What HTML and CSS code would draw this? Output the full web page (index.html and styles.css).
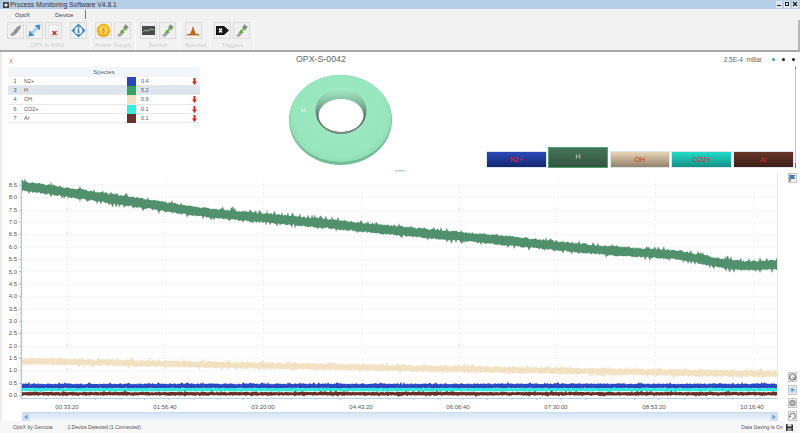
FILE: index.html
```html
<!DOCTYPE html>
<html lang="en">
<head>
<meta charset="utf-8">
<title>Process Monitoring Software</title>
<link rel="stylesheet" href="styles.css">
</head>
<body>
<svg class="defs" width="0" height="0">
  <symbol id="wrench" viewBox="0 0 15 15">
    <path d="M2 13l5-6 3 2-5 5z" fill="#a4a4a4"/>
    <path d="M9 3l2-2 1 2 2 1-2 2-1 2-1-2-2-1z" fill="#8e8e8e"/>
    <path d="M12 3.500L8 7.500" stroke="#6f6f6f" stroke-width="1"/>
    <path d="M11 4.500L7.500 8" stroke="#63b52f" stroke-width="1.300"/>
    <path d="M5.200 10.500l1-4 3 3z" fill="#63b52f"/>
  </symbol>
</svg>
<header class="titlebar">
  <svg class="appicon" viewBox="0 0 6 6"><rect width="6" height="6" fill="#444"/><circle cx="3" cy="3" r="1.600" fill="#eee"/></svg>
  <span class="apptitle">Process Monitoring Software V4.8.1</span>
  <div class="winbtns">
    <span class="winbtn"><svg viewBox="0 0 6 6"><rect x="1" y="4" width="4" height="1" fill="#222"/></svg></span>
    <span class="winbtn"><svg viewBox="0 0 6 6"><rect x="1.500" y="1.500" width="3" height="3" fill="none" stroke="#222"/></svg></span>
    <span class="winbtn"><svg viewBox="0 0 6 6"><path d="M1 1l4 4M5 1L1 5" stroke="#111" stroke-width="1.200"/></svg></span>
  </div>
</header>
<nav class="tabs">
  <span class="tab tab-optix">OptiX</span>
  <span class="tab tab-device">Device</span>
  <span class="tabsep"></span>
</nav>
<section class="ribbon">
  <div class="group group-first">
    <div class="btns">
      <span class="rbtn"><svg viewBox="0 0 15 15"><path d="M2 12l3-3 4-5 4-2-1 4-4 5-3 2z" fill="#8f8f8f"/><path d="M4 9l3 3M8 4l3 3" stroke="#b5b5b5"/></svg></span>
      <span class="rbtn"><svg viewBox="0 0 15 15"><path d="M1.500 13.500l1-6 5 5z" fill="#3d8fdc"/><path d="M13.500 1.500l-1 6-5-5z" fill="#3d8fdc"/><path d="M5 10l5-5" stroke="#a9d2f2" stroke-width="3"/></svg></span>
      <span class="rbtn"><svg viewBox="0 0 15 15"><rect x="3" y="2" width="9" height="11" fill="#fff" stroke="#ccc" stroke-width=".6"/><path d="M6.500 8l4 4M10.500 8l-4 4" stroke="#d92020" stroke-width="1.500"/></svg></span>
      <span class="rbtn rbtn-gap"><svg viewBox="0 0 15 15"><path d="M7.500 .5l7 7-7 7-7-7z" fill="#3f87cf"/><circle cx="7.500" cy="7.500" r="3.800" fill="#e9f3fb"/><rect x="6.800" y="6.500" width="1.500" height="3.500" fill="#2a67b0"/><rect x="6.800" y="4.500" width="1.500" height="1.300" fill="#2a67b0"/></svg></span>
    </div>
    <span class="grouplabel">OPX-S-0042</span>
  </div>
  <div class="group">
    <div class="btns">
      <span class="rbtn"><svg viewBox="0 0 15 15"><circle cx="7.500" cy="7.500" r="6.800" fill="#f4ae1c"/><circle cx="7.500" cy="7" r="4.500" fill="#fcd34a"/><path d="M8.300 4L6.800 7.500h1.600L7 11" fill="none" stroke="#e0782a" stroke-width=".9"/></svg></span>
      <span class="rbtn"><svg viewBox="0 0 15 15"><use href="#wrench"/></svg></span>
    </div>
    <span class="grouplabel">Power Supply</span>
  </div>
  <div class="group">
    <div class="btns">
      <span class="rbtn"><svg viewBox="0 0 15 15"><rect x="1" y="3" width="13" height="9" fill="#4a4a4a"/><path d="M2 9l3-2 2 1 3-2 3 1" fill="none" stroke="#8fc7a0"/></svg></span>
      <span class="rbtn"><svg viewBox="0 0 15 15"><use href="#wrench"/></svg></span>
    </div>
    <span class="grouplabel">Sensor</span>
  </div>
  <div class="group group-species">
    <div class="btns">
      <span class="rbtn"><svg viewBox="0 0 15 15"><path d="M1 11h3l1-2 2-6 2 6 1 2h3v1H1z" fill="#b9661d"/><path d="M1 12.500h13" stroke="#e8b98a"/></svg></span>
    </div>
    <span class="grouplabel">Species</span>
  </div>
  <div class="group">
    <div class="btns">
      <span class="rbtn"><svg viewBox="0 0 15 15"><path d="M1 3h8l5 4.500-5 4.500H1z" fill="#161616"/><path d="M4 5.500l3 4M7 5.500l-3 4" stroke="#fff" stroke-width="1.300"/></svg></span>
      <span class="rbtn"><svg viewBox="0 0 15 15"><use href="#wrench"/></svg></span>
    </div>
    <span class="grouplabel">Triggers</span>
  </div>
</section>
<main class="main">
  <section class="top">
    <div class="left">
      <svg class="chi" viewBox="0 0 4 6"><path d="M.5 .5l3 5M3.500 .5l-3 5" stroke="#e2736e" stroke-width=".7"/></svg>
      <div class="species">
        <div class="species-head">Species</div>
        <div class="srow"><span class="snum">1</span><span class="sname">N2+</span><span class="swatch c-n2"></span><span class="sval">0.4</span><span class="sarrow"><svg viewBox="0 0 5 7"><path d="M1.500 0h2v3.500H5L2.500 7 0 3.500h1.500z"/></svg></span></div>
        <div class="srow selected"><span class="snum">3</span><span class="sname">H</span><span class="swatch c-h"></span><span class="sval">5.2</span><span class="sarrow"></span></div>
        <div class="srow"><span class="snum">4</span><span class="sname">OH</span><span class="swatch c-oh"></span><span class="sval">0.9</span><span class="sarrow"><svg viewBox="0 0 5 7"><path d="M1.500 0h2v3.500H5L2.500 7 0 3.500h1.500z"/></svg></span></div>
        <div class="srow"><span class="snum">6</span><span class="sname">CO2+</span><span class="swatch c-co"></span><span class="sval">0.1</span><span class="sarrow"><svg viewBox="0 0 5 7"><path d="M1.500 0h2v3.500H5L2.500 7 0 3.500h1.500z"/></svg></span></div>
        <div class="srow"><span class="snum">7</span><span class="sname">Ar</span><span class="swatch c-ar"></span><span class="sval">0.1</span><span class="sarrow"><svg viewBox="0 0 5 7"><path d="M1.500 0h2v3.500H5L2.500 7 0 3.500h1.500z"/></svg></span></div>
      </div>
    </div>
    <div class="center">
      <h1 class="device">OPX-S-0042</h1>
      <svg class="torus" viewBox="285 70 125 102">
        <defs>
          <radialGradient id="tbody" gradientUnits="userSpaceOnUse" cx="340" cy="114" r="56" gradientTransform="translate(340 114) scale(1 .92) translate(-340 -114)">
            <stop offset="0" stop-color="#9be9c2"/>
            <stop offset=".82" stop-color="#97e6bd"/>
            <stop offset=".93" stop-color="#92dfb6"/>
            <stop offset="1" stop-color="#6fb892"/>
          </radialGradient>
          <linearGradient id="tlip" x1="0" y1="0" x2="0" y2="1">
            <stop offset="0" stop-color="#a6eec9"/>
            <stop offset=".35" stop-color="#7db798"/>
            <stop offset=".7" stop-color="#55655c"/>
            <stop offset="1" stop-color="#5b6a62"/>
          </linearGradient>
        </defs>
        <ellipse cx="340.500" cy="120" rx="51.500" ry="45" fill="#74bd96"/>
        <ellipse cx="340.500" cy="118.500" rx="51" ry="43.500" fill="url(#tbody)"/>
        <ellipse cx="341" cy="111" rx="25.500" ry="23" fill="url(#tlip)"/>
        <ellipse cx="341" cy="115.500" rx="22.500" ry="16.500" fill="#fff"/>
        <path d="M318.500 115.500a22.500 16.500 0 0 0 45 0a22.500 18.500 0 0 1-45 0z" fill="#7d8a83"/>
        <text class="torus-label" x="301" y="111.500">H</text>
        <rect x="395" y="170" width="10" height="1.500" fill="#bcd2e6"/>
      </svg>
    </div>
    <div class="right">
      <div class="readout">
        <span class="pressure">2.5E-4&nbsp;&nbsp;mBar</span>
        <span class="dot dot-blue"></span>
        <span class="dot"></span>
        <span class="dot"></span>
      </div>
      <div class="speciesbar">
        <div class="sbtn s-n2">N2+</div>
        <div class="sbtn s-h">H</div>
        <div class="sbtn s-oh">OH</div>
        <div class="sbtn s-co">CO2+</div>
        <div class="sbtn s-ar">Ar</div>
        <div class="sliver"></div>
      </div>
    </div>
  </section>
  <section class="chartrow">
    <div class="chartcol">
      <svg id="chart" class="chart" viewBox="2 172 784 240">
        <g id="grid"></g>
        <g class="ylabels">
          <text x="17" y="187">8.5</text><text x="17" y="199.400">8.0</text><text x="17" y="211.700">7.5</text>
          <text x="17" y="224.100">7.0</text><text x="17" y="236.400">6.5</text><text x="17" y="248.800">6.0</text>
          <text x="17" y="261.100">5.5</text><text x="17" y="273.500">5.0</text><text x="17" y="285.800">4.5</text>
          <text x="17" y="298.200">4.0</text><text x="17" y="310.500">3.5</text><text x="17" y="322.900">3.0</text>
          <text x="17" y="335.200">2.5</text><text x="17" y="347.600">2.0</text><text x="17" y="359.900">1.5</text>
          <text x="17" y="372.300">1.0</text><text x="17" y="384.600">0.5</text><text x="17" y="397">0.0</text>
        </g>
        <g class="xlabels">
          <text x="67" y="409">00:33:20</text><text x="165" y="409">01:56:40</text><text x="263" y="409">03:20:00</text>
          <text x="361" y="409">04:43:20</text><text x="458" y="409">06:06:40</text><text x="556" y="409">07:30:00</text>
          <text x="654" y="409">08:53:20</text><text x="752" y="409">10:16:40</text>
        </g>
        <g id="traces"></g>
      </svg>
      <div class="scrollbar">
        <span class="sarrowbtn"><svg viewBox="0 0 8 8"><path d="M5.500 1.500v5L2 4z" fill="#6d9fd0"/></svg></span>
        <span class="sarrowbtn"><svg viewBox="0 0 8 8"><path d="M2.500 1.500v5L6 4z" fill="#6d9fd0"/></svg></span>
      </div>
    </div>
    <aside class="side">
      <span class="sidebtn"><svg viewBox="0 0 9 10"><path d="M2 1.500v7" stroke="#333"/><path d="M2.500 2h5L6 4l1.500 2h-5z" fill="#2f7fc9"/></svg></span>
      <div class="sidestack">
        <span class="sidebtn"><svg viewBox="0 0 9 10"><circle cx="4.500" cy="5" r="3" fill="none" stroke="#777" stroke-width="1.200"/><path d="M4.500 5l3 3" stroke="#777"/></svg></span>
        <span class="sidebtn"><svg viewBox="0 0 9 10"><circle cx="4.500" cy="5" r="3.200" fill="#bcd7ef"/><path d="M3.500 3.200v3.600L6.300 5z" fill="#3e87cc"/></svg></span>
        <span class="sidebtn"><svg viewBox="0 0 9 10"><circle cx="4.500" cy="5" r="3.200" fill="#9a9a9a"/><circle cx="4.500" cy="5" r="1.500" fill="#c4c4c4"/></svg></span>
        <span class="sidebtn"><svg viewBox="0 0 9 10"><path d="M1.800 5.500a2.800 2.800 0 1 1 2.700 2.300" fill="none" stroke="#777"/><path d="M.5 5h2.600L1.800 7z" fill="#777"/></svg></span>
      </div>
    </aside>
  </section>
</main>
<footer class="status">
  <span class="st-brand">OptiX by Gencoa</span>
  <span class="st-dev">1 Device Detected (1 Connected).</span>
  <span class="st-save">Data Saving is On</span>
  <svg class="disk" viewBox="0 0 7 7"><path d="M0 0h6l1 1v6H0z" fill="#333"/><rect x="1.500" y="0" width="4" height="2.500" fill="#ddd"/><rect x="1.500" y="4" width="4" height="3" fill="#999"/></svg>
</footer>
<script src="chart.js"></script>
</body>
</html>
```
FILE: styles.css
```css
* { box-sizing: border-box; }
html, body { margin: 0; padding: 0; }
body {
  width: 800px; height: 433px; overflow: hidden;
  display: flex; flex-direction: column;
  font-family: "Liberation Sans", Arial, sans-serif;
  background: #fff; color: #555;
}
.defs { position: absolute; }
svg { display: block; }

.titlebar {
  height: 9px; background: #b5cee8; display: flex; align-items: center;
  padding: 0 2px 0 3px; font-size: 6.7px; color: #333;
}
.appicon { width: 6px; height: 6px; margin-right: 1px; }
.apptitle { white-space: nowrap; }
.winbtns { margin-left: auto; display: flex; gap: 2px; }
.winbtn { width: 6px; height: 7px; background: #dfe6ee; }

.tabs {
  height: 11px; background: #f1f1f1; display: flex; align-items: center;
  font-size: 6px; color: #444;
}
.tab-optix { margin-left: 15px; }
.tab-device { margin-left: 25px; }
.tabsep { width: 1px; height: 9px; background: #777; margin-left: 12px; }

.ribbon {
  height: 32px; background: #f1f1f1; display: flex; padding-top: 2px;
  border-bottom: 2px solid #a9a9a9;
  border-right: 2px solid #b5b5b5;
}
.group {
  display: flex; flex-direction: column;
  padding: 0 3px 0 4px; border-right: 1px solid #fafafa;
}
.group-first { padding-left: 7px; }
.group-species { padding-left: 5px; }
.btns { display: flex; gap: 2px; }
.rbtn {
  width: 17px; height: 17px; padding: 1px;
  background: #f0f0f0; border: 1px solid #dcdcdc;
}
.rbtn svg { width: 15px; height: 15px; margin: -1px; }
.rbtn-gap { margin-left: 6px; }
.grouplabel {
  margin-top: 2px; font-size: 6px; line-height: 8px; color: #cfcfcf;
  text-align: center; white-space: nowrap;
}

.main {
  flex: 1; display: flex; flex-direction: column; min-height: 0;
  border-left: 2px solid #ececec;
}
.top { height: 120px; display: flex; }

.left { width: 203px; padding: 6px 0 0 6px; }
.chi { width: 4px; height: 6px; margin-left: 1px; margin-bottom: 3px; }
.species { width: 192px; font-size: 5.5px; color: #555; }
.species-head {
  height: 10px; line-height: 10px; background: #f2f5f9; text-align: center;
  font-size: 6px; color: #666;
}
.srow {
  display: grid; grid-template-columns: 14px 105px 9px 46px 18px;
  height: 9.2px; line-height: 9px; border-bottom: 1px solid #e6eaee;
}
.srow.selected { background: #dfe5ec; }
.snum { text-align: center; }
.sname { padding-left: 2px; }
.sval { padding-left: 5px; }
.sarrow { display: flex; justify-content: flex-end; padding: 1px 3px 0 0; }
.sarrow svg { width: 5px; height: 7px; fill: #e5231b; }
.c-n2 { background: #2747bb; }
.c-h { background: #31a35c; }
.c-oh { background: #f2dfbd; }
.c-co { background: #2ff0dc; }
.c-ar { background: #66332a; }

.center { width: 281px; }
.device {
  margin: 1px 0 0; padding-left: 91px; height: 12px;
  font-weight: 400; font-size: 8.8px; line-height: 12px; color: #666;
}
.torus { width: 125px; height: 102px; margin: 5px 0 0 80px; }
.torus-label { font-size: 6px; fill: #f2fff8; font-family: "Liberation Sans", Arial, sans-serif; }

.right { flex: 1; display: flex; flex-direction: column; padding-bottom: 4px; }
.readout {
  display: flex; align-items: center; justify-content: flex-end;
  height: 14px; padding: 1px 5.5px 0 0; font-size: 6.5px; color: #666; gap: 7px;
}
.pressure { margin-right: 2.5px; white-space: nowrap; }
.dot { width: 3px; height: 3px; border-radius: 50%; background: #222; }
.dot-blue { background: #2a9ddb; }
.speciesbar { flex: 1; display: flex; align-items: flex-end; gap: 1.300px; padding-right: 2px; }
.sbtn {
  width: 60.500px; height: 17.500px; font-size: 7px; line-height: 16px; text-align: center;
  color: #e0242a; border: 1px solid #dfe7ee;
}
.s-n2 { background: linear-gradient(#2a4ab9, #14286f); }
.s-h {
  height: 21px; line-height: 18px; color: #cfd8d2; border: 1px solid #4fa673;
  background: linear-gradient(#47745a, #33543f);
}
.s-oh { background: linear-gradient(#e6d5b4, #92826c); }
.s-co { background: linear-gradient(#22dcca, #149086); }
.s-ar { background: linear-gradient(#653528, #3d2018); }
.sliver {
  width: 1px; flex: none; align-self: stretch; margin: 1px 0 0 0;
  background: linear-gradient(#e4423a 1px, #a9cdf0 3px, #a9cdf0 95%, #e4423a 95%);
}

.chartrow { flex: 1; min-height: 0; display: flex; }
.chartcol { width: 784px; display: flex; flex-direction: column; }
.chart { width: 784px; height: 240px; }
.ylabels text { font-size: 6px; fill: #555; text-anchor: end; font-family: "Liberation Sans", Arial, sans-serif; }
.xlabels text { font-size: 6px; fill: #555; text-anchor: middle; font-family: "Liberation Sans", Arial, sans-serif; }
.scrollbar {
  margin-left: 20px; width: 756px; height: 9px; display: flex; justify-content: space-between;
  background: linear-gradient(#d5e5f4, #eef4fa); border-top: 1px solid #c8dbee;
}
.sarrowbtn { width: 8px; height: 8px; background: #cfe0f1; }
.sarrowbtn svg { width: 8px; height: 8px; }
.side { width: 14px; padding: 1px 0 0 2px; display: flex; flex-direction: column; }
.sidestack { margin-top: auto; display: flex; flex-direction: column; gap: 3px; }
.sidebtn { display: block; width: 9px; height: 10px; background: #f1f1f1; border: 1px solid #c6c6c6; }
.sidebtn svg { width: 9px; height: 10px; margin: -1px; }

.status {
  height: 12px; display: flex; align-items: center; font-size: 5.2px; color: #555;
  padding: 0 7px 0 13px; background: #f7f7f7;
}
.st-dev { margin-left: 15px; letter-spacing: -.12px; }
.st-save { margin-left: auto; }
.disk { width: 7px; height: 7px; margin-left: 3px; }
```
FILE: chart.js
```js
(function () {
  var NS = "http://www.w3.org/2000/svg";
  var seed = 12345;
  function rnd() {
    seed = (seed * 1664525 + 1013904223) % 4294967296;
    return seed / 4294967296;
  }
  function line(parent, x1, y1, x2, y2, color, dash) {
    var l = document.createElementNS(NS, "line");
    l.setAttribute("x1", x1); l.setAttribute("y1", y1);
    l.setAttribute("x2", x2); l.setAttribute("y2", y2);
    l.setAttribute("stroke", color); l.setAttribute("stroke-width", "1");
    if (dash) l.setAttribute("stroke-dasharray", dash);
    parent.appendChild(l);
  }
  var grid = document.getElementById("grid");
  var x0 = 22, x1 = 777, i, y;
  for (i = 0; i < 18; i++) {
    y = Math.round(185 + i * 12.35) + 0.5;
    line(grid, x0, y, x1, y, "#e4e4e4", "1 3");
    line(grid, 19, y, 21, y, "#a8c8e8");
  }
  for (i = 0; i < 8; i++) {
    var gx = 67.5 + i * 98;
    line(grid, gx, 180, gx, 398, "#e8e8e8", "1 3");
  }
  for (var t = 22; t < 778; t += 24.5) line(grid, t, 398, t, 400, "#a8c8e8");
  for (var u = 180; u < 398; u += 2.5) line(grid, 20, u, 21.5, u, "#bcd6ee");
  line(grid, 21.5, 180, 21.5, 399, "#a8c8e8");
  line(grid, 21, 398.5, 777, 398.5, "#b5cfe8");
  line(grid, 777.5, 172, 777.5, 398, "#dce8f3");

  function interp(pts, x) {
    for (var k = 1; k < pts.length; k++) {
      if (x <= pts[k][0]) {
        var a = pts[k - 1], b = pts[k];
        return a[1] + (b[1] - a[1]) * (x - a[0]) / (b[0] - a[0]);
      }
    }
    return pts[pts.length - 1][1];
  }
  function band(center, half, noise, color, spikeP) {
    var top = [], bot = [];
    for (var x = x0; x <= x1; x += 1) {
      var c = interp(center, x);
      var a = rnd() * noise + (rnd() < spikeP ? noise * 1.4 : 0);
      var b = rnd() * noise + (rnd() < spikeP ? noise * 1.4 : 0);
      top.push(x.toFixed(2) + " " + (c - half - a).toFixed(2));
      bot.unshift(x.toFixed(2) + " " + (c + half + b).toFixed(2));
    }
    var p = document.createElementNS(NS, "path");
    p.setAttribute("d", "M" + top.join("L") + "L" + bot.join("L") + "Z");
    p.setAttribute("fill", color);
    document.getElementById("traces").appendChild(p);
  }
  band([[22, 186], [67, 192], [133, 202], [200, 212], [300, 221], [400, 231], [500, 240], [600, 250], [680, 255], [720, 263], [745, 266], [777, 264.500]], 3.6, 2, "#50906d", 0.08);
  band([[22, 361], [200, 364.5], [400, 368], [600, 371.5], [777, 374]], 2.2, 1.8, "#f3e1c3", 0.06);
  band([[22, 386], [777, 386]], 1.6, 1.2, "#2b48c4", 0.06);
  band([[22, 389.7], [777, 389.7]], 1.2, 0.7, "#2eeadb", 0.03);
  band([[22, 393.7], [777, 393.7]], 1.2, 0.9, "#6a2e28", 0.05);
})();
```
